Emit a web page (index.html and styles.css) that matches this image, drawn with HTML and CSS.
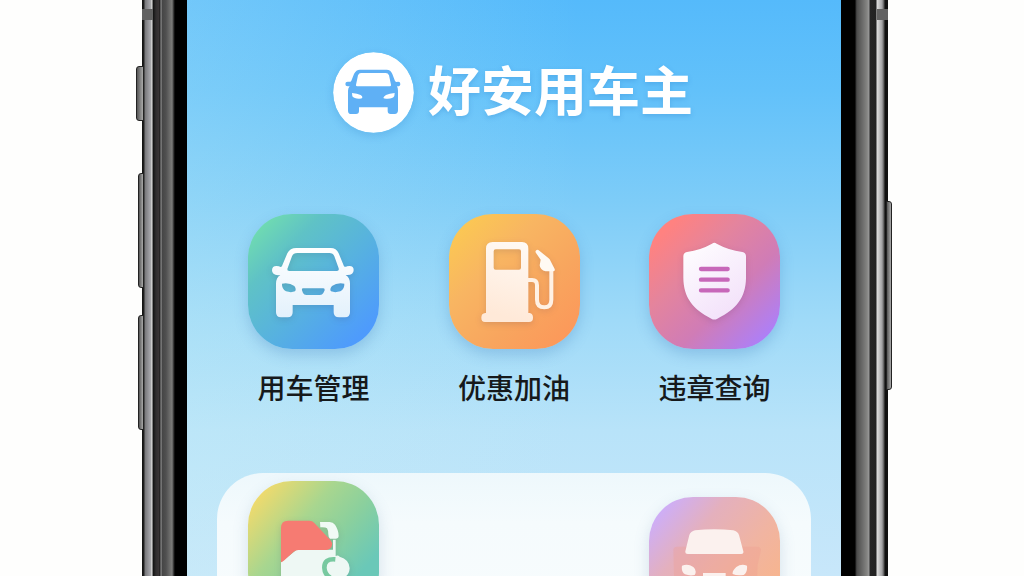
FILE: index.html
```
<!DOCTYPE html>
<html lang="zh-CN">
<head>
    <meta charset="UTF-8">
    <meta name="viewport" content="width=device-width, initial-scale=1.0">
    <title>好安用车主</title>
    <link rel="stylesheet" href="styles.css">
</head>
<body>
    <div class="phone">
        <div class="rail rail-left">
            <span class="band"></span>
            <span class="key key-mute"></span>
            <span class="key key-up"></span>
            <span class="key key-down"></span>
        </div>

        <main class="screen">
            <header class="brand">
                <svg class="logo" viewBox="26 21 243 243" aria-hidden="true">
                    <circle cx="147.500" cy="142.500" r="121" fill="#fff"/>
                    <path fill="#5fb0f5" d="M107 74H187Q199 74 204 87L212 108Q215 112 220 110Q228 109 228 117Q228 125 218 124Q221 129 221 137V196Q221 207 211 207H199Q190 207 190 198V187H104V198Q104 207 95 207H81Q71 207 71 197V137Q71 129 76 124H70Q63 124 63 117Q63 109 72 110Q78 112 81 107L89 87Q95 74 107 74Z"/>
                    <path fill="#fff" d="M110 84H184Q191 84 194 91L200 119Q201 124 196 124H99Q94 124 95 119L101 91Q104 84 110 84ZM83 144Q99 145 109 150Q115 154 114 158Q113 161 104 161Q89 161 84 154ZM211 144Q195 145 185 150Q178 154 177 159Q180 162 190 161Q206 161 210 153Z"/>
                </svg>
                <h1>好安用车主</h1>
            </header>

            <nav class="services">
                <button class="service" type="button">
                    <span class="tile tile-blue">
                        <svg viewBox="54 42 393 405" aria-hidden="true">
                            <defs>
                                <linearGradient id="carFill" x1="0" y1="0" x2="0" y2="1">
                                    <stop offset="0" stop-color="#fff"/>
                                    <stop offset="1" stop-color="#e3f1fc"/>
                                </linearGradient>
                            </defs>
                            <path fill="url(#carFill)" fill-rule="evenodd" d="M199 144H302Q319 144 326 160L342 199Q346 202 351 199Q371 195 371 210Q371 227 347 225Q360 233 360 251V337Q360 352 345 352H327Q311 352 311 337V315H188V337Q188 352 173 352H153Q138 352 138 337V251Q138 233 151 225Q126 228 126 211Q126 195 147 199Q153 203 156 198L172 160Q180 144 199 144ZM202 159Q190 159 186 169L172 207Q171 213 178 213H320Q328 213 326 205L313 169Q309 159 298 159ZM156 251Q178 247 193 258Q200 268 195 274Q184 279 168 274Q155 266 156 251ZM343 251Q321 247 306 258Q298 268 303 274Q315 279 331 274Q344 266 343 251ZM219 265Q214 265 216 271L219 279Q222 285 229 285H270Q277 285 280 279L284 271Q285 265 280 265Z"/>
                        </svg>
                    </span>
                    <span class="label">用车管理</span>
                </button>

                <button class="service" type="button">
                    <span class="tile tile-orange">
                        <svg viewBox="54 42 393 405" aria-hidden="true">
                            <defs>
                                <linearGradient id="pumpFill" x1="1" y1="0" x2="0.800" y2="1">
                                    <stop offset="0" stop-color="#fffaf5"/>
                                    <stop offset="1" stop-color="#ffe9d8"/>
                                </linearGradient>
                            </defs>
                            <path fill="url(#pumpFill)" fill-rule="evenodd" d="M185 126H273Q292 126 292 146V339H296Q306 341 306 353Q306 366 294 366H162Q151 366 151 353Q151 340 163 339H165V146Q165 126 185 126ZM194 148Q188 148 188 154V203Q188 209 194 209H264Q270 209 270 203V154Q270 148 264 148Z"/>
                            <path fill="none" stroke="#fff1e4" stroke-width="12" stroke-linejoin="round" d="M290 240H303Q318 240 318 256V299Q318 322 340 322Q361 322 361 299V210"/>
                            <path fill="#fffaf3" d="M315 159Q311 153 317 150Q320 148 325 152L352 174L356 178L371 207Q373 214 366 214H344Q327 210 326 196L329 179Z"/>
                        </svg>
                    </span>
                    <span class="label">优惠加油</span>
                </button>

                <button class="service" type="button">
                    <span class="tile tile-pink">
                        <svg viewBox="57 42 393 405" aria-hidden="true">
                            <defs>
                                <linearGradient id="shieldFill" x1="0" y1="0" x2="0.600" y2="1">
                                    <stop offset="0" stop-color="#fff"/>
                                    <stop offset="1" stop-color="#f3e2fa"/>
                                </linearGradient>
                            </defs>
                            <path fill="url(#shieldFill)" d="M246 131Q253 126 260 131Q295 150 337 156Q348 158 348 169V235C347 292 320 328 262 356Q253 361 244 356C188 328 161 292 160 235V169Q160 158 171 156Q212 150 246 131Z"/>
                            <path fill="none" stroke="#c767b9" stroke-width="13" stroke-linecap="round" d="M213 207H293M213 239H293M213 271H293"/>
                        </svg>
                    </span>
                    <span class="label">违章查询</span>
                </button>
            </nav>

            <section class="panel">
                <button class="tile tile-green" type="button" aria-label="加油">
                    <svg viewBox="144 64 393 405" aria-hidden="true">
                        <path fill="#eef8f4" d="M243 308L290 270H399V240H407V289Q413 285 419 291Q448 299 449 326Q448 342 438 350V440H243Z"/>
                        <path fill="#f67b72" d="M264 183H328Q337 183 343 190L391 241Q398 249 396 257Q393 270 379 271H295Q287 271 281 276L253 302Q248 307 243 308V205Q243 183 264 183Z"/>
                        <path fill="#f1faf5" d="M360 187H389Q399 187 405 195Q416 211 416 229Q415 238 405 237H390Q385 234 385 224Q385 212 381 206Q377 202 361 203Z"/>
                        <path fill="none" stroke="#78c9a0" stroke-width="14" d="M406 299Q373 296 373 324Q374 345 391 354"/>
                    </svg>
                </button>
                <button class="tile tile-peach" type="button" aria-label="车辆">
                    <svg viewBox="88 108 393 405" aria-hidden="true">
                        <path fill="#ed9c8d" fill-opacity="0.300" d="M172 257H412Q424 257 424 268L414 311L409 420H165L161 268Q161 257 172 257Z"/>
                        <path fill="#fbf1ee" d="M226 208Q284 201 341 208Q354 211 358 222L371 271Q373 279 365 279H204Q196 279 197 271L209 222Q213 211 226 208ZM187 314Q205 307 221 318Q233 329 225 342Q210 345 196 340Q184 332 187 314ZM382 314Q365 307 350 318Q337 330 339 339Q351 345 372 342Q384 334 382 314ZM250 336H318V352H250Z"/>
                    </svg>
                </button>
            </section>
        </main>

        <div class="rail rail-right">
            <span class="band"></span>
            <span class="key key-power"></span>
        </div>
    </div>
</body>
</html>
```
FILE: styles.css
```
* {
    box-sizing: border-box;
}
body {
    margin: 0;
    padding: 0 136px 0 142px;
    background-color: #fefefd;
    font-family: "Noto Sans CJK SC", sans-serif;
    color: #16191b;
}
.phone {
    display: flex;
    height: 100vh;
}

/* metal frame */
.rail {
    position: relative;
    flex: none;
    width: 45px;
}
.rail-left {
    background: linear-gradient(to right, #111 0, #222 2px, #77777a 3px, #a3a3a8 8px, #aaa 9px, #eee 10px, #111 11px, #302e2f 14px, #3a3536 17px, #151515 18px, #a0a0a0 19px, #454545 20px, #505050 24px, #7c7c7a 30px, #222 32px, #000 33px);
}
.rail-right {
    width: 47px;
    background: linear-gradient(to left, #111 0, #111 3px, #555 4px, #a3a3a5 6px, #d2d2d2 10px, #ddd 11px, #222 12px, #252525 18px, #999 19px, #858583 21px, #4c4c4c 31px, #333 32px, #000 33px);
}
.band {
    position: absolute;
    top: 9px;
    left: 0;
    width: 11px;
    height: 11px;
    background-color: #626262;
}
.rail-right .band {
    left: auto;
    right: 0;
}
.key {
    position: absolute;
    left: -4px;
    width: 6px;
    height: 115px;
    border: 1px solid #222;
    border-radius: 3px 0 0 3px;
    background: linear-gradient(to right, #555, #aaa);
}
.key-mute {
    top: 66px;
    left: -6px;
    width: 8px;
    height: 55px;
}
.key-up {
    top: 173px;
}
.key-down {
    top: 315px;
}
.key-power {
    top: 201px;
    left: auto;
    right: -4px;
    height: 189px;
    border-radius: 0 3px 3px 0;
}

.screen {
    display: flex;
    flex: 1;
    flex-direction: column;
    min-width: 0;
    overflow: hidden;
    background:
        linear-gradient(to right, rgba(200, 240, 245, 0.25), rgba(200, 240, 245, 0) 60%),
        linear-gradient(to bottom, #55bafb 0, #62c1fa 90px, #7dccf8 200px, #9fdaf8 320px, #b8e3f9 430px, #c8e7fa 576px);
}
.brand {
    display: flex;
    align-items: flex-start;
    justify-content: center;
    gap: 14px;
    padding: 52px 2px 0 0;
}
.logo {
    width: 81px;
    height: 81px;
    border-radius: 50%;
    box-shadow: 0 3px 8px rgba(30, 110, 190, 0.2);
}
h1 {
    margin: 0;
    font-size: 53px;
    line-height: 72px;
    font-weight: bold;
    color: #fff;
    text-shadow: 0 2px 5px rgba(30, 110, 190, 0.25);
}

.services {
    display: flex;
    justify-content: space-between;
    padding: 81px 61px 0;
}
button {
    padding: 0;
    border: none;
    background: none;
    font-family: inherit;
    color: inherit;
    cursor: pointer;
}
.service {
    display: flex;
    flex-direction: column;
    align-items: center;
    gap: 18px;
    width: 131px;
}
.tile {
    display: block;
    flex: none;
    width: 131px;
    height: 135px;
    border-radius: 44px;
    overflow: hidden;
    box-shadow: 0 6px 14px rgba(50, 110, 180, 0.25);
}
.tile svg {
    display: block;
    width: 100%;
    height: 100%;
    filter: drop-shadow(0 2px 3px rgba(60, 40, 90, 0.15));
}
.tile-blue {
    background: linear-gradient(135deg, #70dcb0 8%, #5fc2c6 28%, #57b2df 55%, #4e9bfc 88%);
}
.tile-orange {
    background: linear-gradient(135deg, #fbc853 8%, #f8b562 35%, #f8a55e 65%, #fc985a 92%);
}
.tile-pink {
    background: linear-gradient(135deg, #ff8280 12%, #e4849d 36%, #d07cb6 62%, #ae7ff6 90%);
}
.label {
    font-size: 28px;
    line-height: 40px;
    font-weight: 500;
    white-space: nowrap;
}

.panel {
    display: flex;
    flex: 1;
    align-items: flex-start;
    justify-content: space-between;
    margin: 66px 30px 0;
    padding: 8px 31px 0;
    border-radius: 46px 46px 0 0;
    background: linear-gradient(to bottom, #eef8fc, #f5fbfd 50px, #f8fcfd);
}
.tile-green,
.tile-peach {
    box-shadow: 0 6px 16px rgba(80, 120, 160, 0.2);
}
.tile-green {
    background: linear-gradient(130deg, #edda6e 10%, #a8d68f 36%, #8bd09d 55%, #6ac8b8 78%);
}
.tile-peach {
    margin-top: 16px;
    background: linear-gradient(130deg, #ceaef6 10%, #e4b0bd 32%, #f0b4a2 58%, #f8b58c 85%);
}
.tile-peach svg {
    filter: none;
}
```
